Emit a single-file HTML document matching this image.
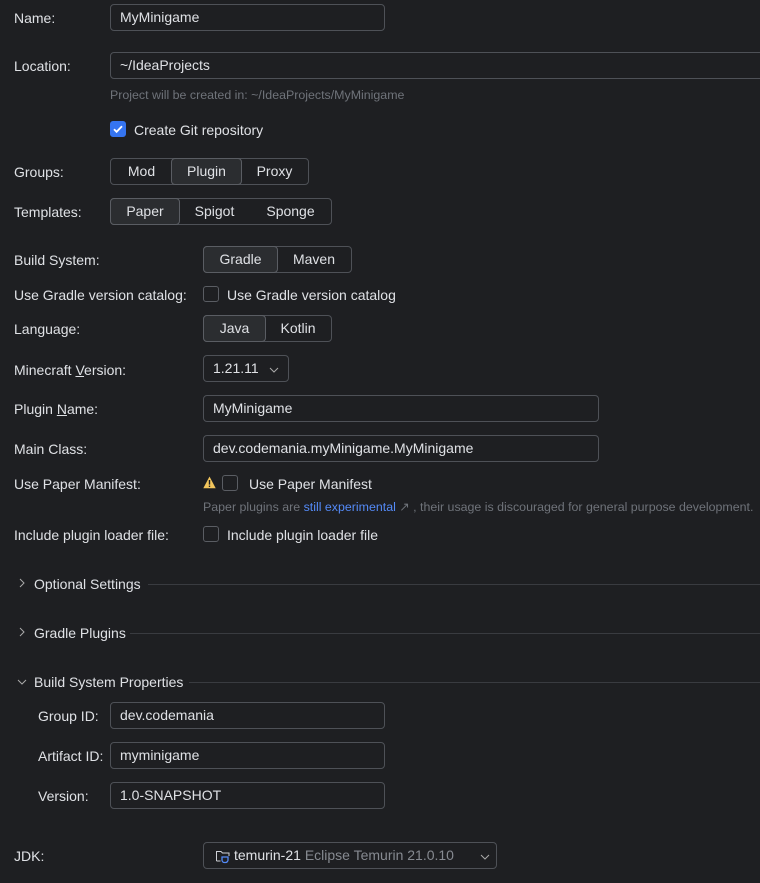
<!DOCTYPE html>
<html><head><meta charset="utf-8"><style>
*{box-sizing:border-box;margin:0;padding:0}
body{width:760px;height:883px;background:#1e1f22;color:#dfe1e5;font-family:"Liberation Sans",sans-serif;font-size:14px;position:relative;overflow:hidden}
.a{position:absolute;white-space:nowrap}
.l{position:absolute;line-height:16px;white-space:nowrap;margin-top:1px}
.f{position:absolute;height:27px;border:1px solid #4e5157;border-radius:4px;padding-left:9px;line-height:25px;white-space:nowrap}
.seg{position:absolute;height:27px;display:flex;border:1px solid #4e5157;border-radius:4px}
.seg div{line-height:25px;text-align:center}
.seg .s{background:#2b2d30;border:1px solid #5a5d63;border-radius:4px;margin:-1px;line-height:25px}
.cb{position:absolute;width:16px;height:16px;border:1px solid #5a5d63;border-radius:3px;background:#1e1f22}
.h{color:#6f737a;font-size:12.4px}
.line{position:absolute;height:1px;background:#393b40}
</style></head><body>
<div class="l" style="left:14px;top:9px">Name:</div>
<div class="f" style="left:110px;top:4px;width:275px">MyMinigame</div>
<div class="l" style="left:14px;top:57px">Location:</div>
<div class="f" style="left:110px;top:52px;width:660px">~/IdeaProjects</div>
<div class="l h" style="left:110px;top:86px">Project will be created in: ~/IdeaProjects/MyMinigame</div>
<div class="cb" style="left:110px;top:121px;background:#3574f0;border-color:#3574f0"><svg width="14" height="14" viewBox="0 0 14 14" style="position:absolute;left:0;top:0"><path d="M3 7.2l2.6 2.6L11 4.2" stroke="#fff" stroke-width="1.8" fill="none"/></svg></div>
<div class="l" style="left:134px;top:121px">Create Git repository</div>

<div class="l" style="left:14px;top:163px">Groups:</div>
<div class="seg" style="left:110px;top:158px;width:199px"><div style="width:61px">Mod</div><div class="s" style="width:71px">Plugin</div><div style="width:67px">Proxy</div></div>
<div class="l" style="left:14px;top:203px">Templates:</div>
<div class="seg" style="left:110px;top:198px;width:222px"><div class="s" style="width:70px">Paper</div><div style="width:71px">Spigot</div><div style="width:81px">Sponge</div></div>

<div class="l" style="left:14px;top:251px">Build System:</div>
<div class="seg" style="left:203px;top:246px;width:149px"><div class="s" style="width:75px">Gradle</div><div style="width:74px">Maven</div></div>
<div class="l" style="left:14px;top:286px">Use Gradle version catalog:</div>
<div class="cb" style="left:203px;top:286px"></div>
<div class="l" style="left:227px;top:286px">Use Gradle version catalog</div>
<div class="l" style="left:14px;top:320px">Language:</div>
<div class="seg" style="left:203px;top:315px;width:129px"><div class="s" style="width:63px">Java</div><div style="width:66px">Kotlin</div></div>
<div class="l" style="left:14px;top:361px">Minecraft <u>V</u>ersion:</div>
<div class="f" style="left:203px;top:355px;width:86px">1.21.11<svg width="10" height="6" style="position:absolute;left:65px;top:11px"><path d="M1 1l4 4 4-4" stroke="#aaa" fill="none"/></svg></div>
<div class="l" style="left:14px;top:400px">Plugin <u>N</u>ame:</div>
<div class="f" style="left:203px;top:395px;width:396px">MyMinigame</div>
<div class="l" style="left:14px;top:440px">Main Class:</div>
<div class="f" style="left:203px;top:435px;width:396px">dev.codemania.myMinigame.MyMinigame</div>
<div class="l" style="left:14px;top:475px">Use Paper Manifest:</div>
<svg class="a" style="left:203px;top:476px" width="13" height="13" viewBox="0 0 13 13"><path d="M6.5 0.5L12.7 12.3H0.3Z" fill="#f2c55c"/><rect x="5.8" y="4" width="1.4" height="4.6" fill="#1e1f22"/><rect x="5.8" y="9.6" width="1.4" height="1.4" fill="#1e1f22"/></svg>
<div class="cb" style="left:222px;top:475px"></div>
<div class="l" style="left:249px;top:475px">Use Paper Manifest</div>
<div class="l h" style="left:203px;top:498px">Paper plugins are <span style="color:#548af7">still experimental</span> ↗ , their usage is discouraged for general purpose development.</div>
<div class="l" style="left:14px;top:526px">Include plugin loader file:</div>
<div class="cb" style="left:203px;top:526px"></div>
<div class="l" style="left:227px;top:526px">Include plugin loader file</div>

<svg class="a" style="left:18px;top:578px" width="8" height="10"><path d="M2 1l4 4-4 4" stroke="#aaa" fill="none"/></svg>
<div class="l" style="left:34px;top:575px">Optional Settings</div>
<div class="line" style="left:148px;top:584px;width:612px"></div>
<svg class="a" style="left:18px;top:627px" width="8" height="10"><path d="M2 1l4 4-4 4" stroke="#aaa" fill="none"/></svg>
<div class="l" style="left:34px;top:624px">Gradle Plugins</div>
<div class="line" style="left:130px;top:633px;width:630px"></div>
<svg class="a" style="left:17px;top:678px" width="10" height="8"><path d="M1 2l4 4 4-4" stroke="#aaa" fill="none"/></svg>
<div class="l" style="left:34px;top:673px">Build System Properties</div>
<div class="line" style="left:189px;top:682px;width:571px"></div>

<div class="l" style="left:38px;top:707px">Group ID:</div>
<div class="f" style="left:110px;top:702px;width:275px">dev.codemania</div>
<div class="l" style="left:38px;top:747px">Artifact ID:</div>
<div class="f" style="left:110px;top:742px;width:275px">myminigame</div>
<div class="l" style="left:38px;top:787px">Version:</div>
<div class="f" style="left:110px;top:782px;width:275px">1.0-SNAPSHOT</div>

<div class="l" style="left:14px;top:847px">JDK:</div>
<div class="f" style="left:203px;top:842px;width:294px;padding-left:12px">
<svg width="16" height="16" viewBox="0 0 16 16" style="position:absolute;left:11px;top:5px"><path d="M1.5 13V3.5h4.5l1.5 1.5h6.5v3" stroke="#ced0d6" fill="none"/><path d="M1.5 13h4" stroke="#ced0d6"/><path d="M7 9h6v3a2.5 2.5 0 0 1-2.5 2.5h-1A2.5 2.5 0 0 1 7 12z" stroke="#548af7" fill="none" stroke-width="1.3"/></svg>
<span style="margin-left:18px">temurin-21</span> <span style="color:#868a91">Eclipse Temurin 21.0.10</span>
<svg width="10" height="6" style="position:absolute;left:276px;top:11px"><path d="M1 1l4 4 4-4" stroke="#aaa" fill="none"/></svg></div>
</body></html>
